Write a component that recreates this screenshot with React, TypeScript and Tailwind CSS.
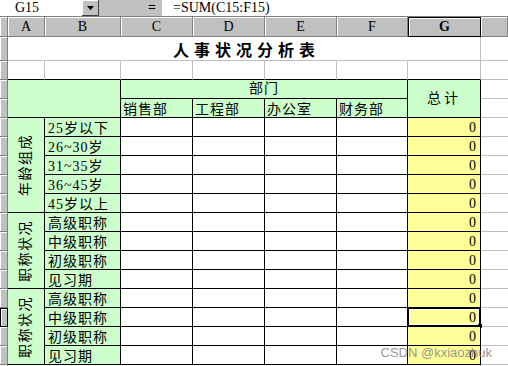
const latin = "font-['Liberation_Serif','Noto_Sans_CJK_SC',serif]";
const cjk = "font-['Liberation_Serif','Noto_Sans_CJK_SC',serif] text-[14px] leading-[14px] tracking-[1px]";

const colHead = "flex items-center justify-center border-r border-b border-[#808080] bg-[#c0c0c0] shadow-[inset_1px_1px_0_#fff] text-[14px] leading-none";
const rowHead = "border-r border-b border-[#808080] bg-[#c0c0c0] shadow-[inset_1px_1px_0_#fff]";
const gridCell = "border-r border-b border-[#c0c0c0] bg-white";
const lastCell = "border-b border-[#c0c0c0] bg-white";
const dataCell = "border-r border-b border-black bg-white";
const greenCell = "flex overflow-hidden whitespace-nowrap border-r border-b border-black bg-[#ccffcc]";
const sumCell = "flex items-end justify-end border-r border-b border-black bg-[#ffff99] pr-[4px] text-[14px] leading-[16px]";

const groups = [
  { title: "年龄组成", span: "row-span-5", rows: ["25岁以下", "26~30岁", "31~35岁", "36~45岁", "45岁以上"] },
  { title: "职称状况", span: "row-span-4", rows: ["高级职称", "中级职称", "初级职称", "见习期"] },
  { title: "职称状况", span: "row-span-4", rows: ["高级职称", "中级职称", "初级职称", "见习期"] },
];

const depts = ["销售部", "工程部", "办公室", "财务部"];

function FormulaBar() {
  return (
    <div className={`flex h-[17px] border-b border-[#808080] bg-[#c0c0c0] text-black ${latin}`}>
      <div className="flex w-[82px] items-center bg-white pl-[15px] text-[14px] leading-none">G15</div>
      <div className="flex w-[17px] items-center justify-center border-r border-b border-[#404040] shadow-[inset_1px_1px_0_#fff]">
        <svg width="7" height="4" viewBox="0 0 7 4">
          <path d="M0 0h7L3.5 4z" fill="#000" />
        </svg>
      </div>
      <div className="flex w-[63px] items-center justify-end pr-[6px] text-[14px] font-bold leading-none">=</div>
      <div className="flex flex-1 items-center bg-white pl-[11px] text-[14px] leading-none">=SUM(C15:F15)</div>
    </div>
  );
}

export default function App() {
  let rowNo = 4;
  return (
    <div className="relative h-[366px] w-[508px] overflow-hidden bg-white text-black">
      <FormulaBar />
      <div className={`grid grid-cols-[8px_37px_76px_72px_72px_72px_71px_73px_1fr] grid-rows-[20px_24px_repeat(17,19px)] ${latin}`}>
        {/* column letters */}
        <div className={rowHead} />
        {["A", "B", "C", "D", "E", "F"].map((c) => (
          <div key={c} className={colHead}>{c}</div>
        ))}
        <div className="flex items-center justify-center border border-black bg-[#c0c0c0] text-[14px] font-bold leading-none shadow-[inset_1px_1px_0_#fff]">G</div>
        <div className={colHead} />

        {/* row 1: title */}
        <div className={rowHead} />
        <div className={`col-span-7 flex items-center justify-center pl-[5px] ${gridCell}`}>
          <span className="font-['Noto_Sans_CJK_SC',sans-serif] text-[16px] font-bold leading-none tracking-[5px]">人事状况分析表</span>
        </div>
        <div className={lastCell} />

        {/* row 2 */}
        <div className={rowHead} />
        {Array.from({ length: 7 }).map((_, i) => (
          <div key={i} className="border-r border-b border-r-[#c0c0c0] border-b-black bg-white" />
        ))}
        <div className={lastCell} />

        {/* row 3 */}
        <div className={rowHead} />
        <div className={`col-span-2 row-span-2 ${greenCell}`} />
        <div className={`col-span-4 items-end justify-center ${greenCell} ${cjk}`}>
          <span className="pb-[2px]">部门</span>
        </div>
        <div className={`row-span-2 items-center justify-center ${greenCell} ${cjk}`}>
          <span className="tracking-[3px]">总计</span>
        </div>
        <div className={lastCell} />

        {/* row 4 */}
        <div className={rowHead} />
        {depts.map((d) => (
          <div key={d} className={`items-end pl-[2px] ${greenCell} ${cjk}`}>{d}</div>
        ))}
        <div className={lastCell} />

        {/* data rows */}
        {groups.map((g, gi) =>
          g.rows.map((label, ri) => {
            rowNo += 1;
            const selected = rowNo === 15;
            return [
              <div key={`rh${gi}-${ri}`} className={selected ? "border border-black bg-[#c0c0c0] shadow-[inset_1px_1px_0_#fff]" : rowHead} />,
              ri === 0 ? (
                <div key={`g${gi}`} className={`${g.span} items-center justify-center ${greenCell} ${cjk}`}>
                  <span className="-rotate-90 tracking-[1.5px]">{g.title}</span>
                </div>
              ) : null,
              <div key={`b${gi}-${ri}`} className={`items-end pl-[3px] ${greenCell} ${cjk}`}>{label}</div>,
              ...depts.map((d) => <div key={`${d}${gi}-${ri}`} className={dataCell} />),
              <div key={`s${gi}-${ri}`} className={`relative ${sumCell}`}>
                0
                {selected && (
                  <div className="absolute -top-px -left-px h-[20px] w-[74px] border-2 border-black shadow-[inset_0_0_0_1px_#fff]">
                    <div className="absolute -right-[3px] -bottom-[3px] h-[4px] w-[4px] bg-black" />
                  </div>
                )}
              </div>,
              <div key={`h${gi}-${ri}`} className={lastCell} />,
            ];
          })
        )}

        {/* row 18 */}
        <div className={rowHead} />
        {Array.from({ length: 7 }).map((_, i) => (
          <div key={i} className={gridCell} />
        ))}
        <div className={lastCell} />
      </div>

      <div className="absolute right-[16px] bottom-[7px] font-['Liberation_Sans',sans-serif] text-[13px] leading-none text-[#8a8a8a]/90">
        CSDN @kxiaozhuk
      </div>
    </div>
  );
}
